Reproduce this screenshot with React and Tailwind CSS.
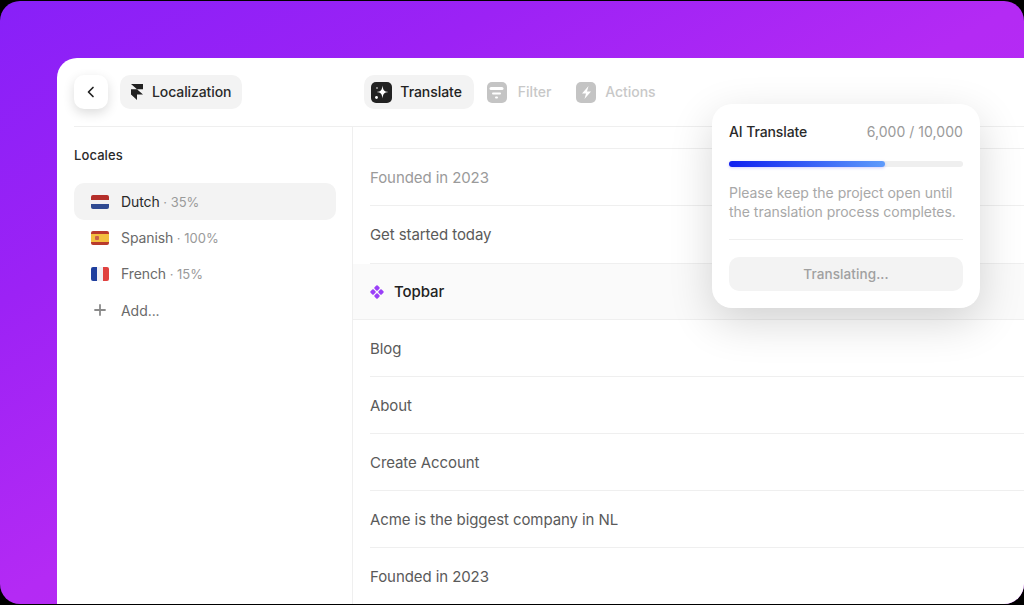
import React from "react";

const Row = ({ children, muted }) => (
  <div className="h-[57px] ml-[17px] pt-[2px] flex items-center border-b border-[#efefef] shrink-0">
    <span className={`text-[15px] tracking-[-0.08px] ${muted ? "text-[#9a9a9a]" : "text-[#5a5a5a]"}`}>{children}</span>
  </div>
);

const Flag = ({ kind }) => {
  if (kind === "fr")
    return (
      <div className="w-[18px] h-[14px] rounded-[2px] overflow-hidden flex shrink-0">
        <div className="flex-1 bg-[#1f3f9e]" />
        <div className="flex-1 bg-[#f0f0f4]" />
        <div className="flex-1 bg-[#e0413f]" />
      </div>
    );
  const colors =
    kind === "nl"
      ? ["bg-[#b42e2a]", "bg-[#f1f1f3]", "bg-[#2f4a92]"]
      : ["bg-[#b93a2c]", "bg-[#f3bf3f]", "bg-[#b93a2c]"];
  return (
    <div className="w-[18px] h-[14px] rounded-[2px] overflow-hidden flex flex-col shrink-0 relative">
      <div className={`${kind === "es" ? "h-[3px]" : "h-[5px]"} ${colors[0]}`} />
      <div className={`flex-1 ${colors[1]}`} />
      <div className={`${kind === "es" ? "h-[3px]" : "h-[5px]"} ${colors[2]}`} />
      {kind === "es" && <div className="absolute left-[4px] top-[5px] w-[4px] h-[4px] rounded-[1px] bg-[#c9604a]" />}
    </div>
  );
};

const Locale = ({ flag, name, pct, active }) => (
  <div className={`rounded-[10px] pl-[17px] flex items-center gap-[12px] text-[14px] ${active ? "h-[37px] bg-[#f3f3f3]" : "h-[36px]"}`}>
    <Flag kind={flag} />
    <span className="tracking-[-0.1px]">
      <span className={active ? "text-[#2a2a2a]" : "text-[#6a6a6a]"}>{name}</span>
      <span className="text-[#9a9a9a] text-[13px] tracking-[0px]"> · {pct}</span>
    </span>
  </div>
);

const Tab = ({ icon, label, active, gap }) => (
  <div className={`h-[34px] flex items-center rounded-[10px] ${active ? "bg-[#f3f3f3] pl-[7px] pr-[12px]" : ""} ${gap}`}>
    {icon}
    <span className={`-mt-[2px] text-[14px] font-medium tracking-[-0.05px] ${active ? "text-[#222222]" : "text-[#c8c8c8]"}`}>{label}</span>
  </div>
);

export default function App() {
  return (
    <div className="w-[1024px] h-[605px] bg-black overflow-hidden relative" style={{ fontFamily: "Inter, sans-serif" }}>
      <div className="mt-px h-[603px] rounded-[20px] bg-[linear-gradient(to_bottom_right,#8820f8_0%,#9c22f5_25%,#b42af4_50%,#bb2cf0_100%)] pl-[57px] pt-[57px] overflow-hidden">
        <div className="bg-white rounded-tl-[20px] h-[546px] flex flex-col relative">
          {/* top bar */}
          <div className="h-[69px] ml-[17px] border-b border-[#efefef] flex items-center shrink-0">
            <div className="w-[34px] h-[34px] rounded-[10px] bg-white shadow-[0_4px_12px_rgba(0,0,0,0.14)] flex items-center justify-center">
              <svg width="16" height="16" viewBox="0 0 16 16" fill="none">
                <path d="M10 3.500 5.500 8l4.500 4.500" stroke="#222" strokeWidth="1.700" strokeLinecap="round" strokeLinejoin="round" />
              </svg>
            </div>
            <div className="ml-[12px] h-[34px] rounded-[10px] bg-[#f3f3f3] flex items-center pl-[10px] pr-[11px] gap-[8px]">
              <svg width="14" height="16" viewBox="0 0 12 16" fill="#222">
                <path d="M0 0h12v5.300H6L0 0ZM0 5.300h6l6 5.300H6V16L0 10.600V5.300Z" />
              </svg>
              <span className="-mt-[2px] text-[14px] font-medium tracking-[-0.1px] text-[#2a2a2a]">Localization</span>
            </div>
            <div className="ml-[122px] flex items-center">
              <Tab
                active
                gap="gap-[8px]"
                label="Translate"
                icon={
                  <div className="w-[21px] h-[21px] rounded-[5px] bg-[#222222] flex items-center justify-center">
                    <svg width="17" height="17" viewBox="0 0 17 17" fill="white">
                      <path d="M9.500 1.500C10 6 11 7.500 15.500 8 11 8.500 10 10 9.500 14.500 9 10 8 8.500 3.500 8 8 7.500 9 6 9.500 1.500Z" />
                      <circle cx="3.500" cy="13.500" r="1.400" />
                      <circle cx="4" cy="4" r="0.800" />
                    </svg>
                  </div>
                }
              />
              <div className="ml-[13px]">
                <Tab
                  gap="gap-[11px]"
                  label="Filter"
                  icon={
                    <div className="w-[20px] h-[21px] rounded-[5px] bg-[#c4c4c4] flex items-center justify-center">
                      <svg width="17" height="17" viewBox="0 0 17 17" fill="none" stroke="white" strokeLinecap="round">
                        <path d="M3 4.500h11" strokeWidth="3" />
                        <path d="M5 9.500h7" strokeWidth="2" />
                        <path d="M8 13.500h1" strokeWidth="2" />
                      </svg>
                    </div>
                  }
                />
              </div>
              <div className="ml-[25px]">
                <Tab
                  gap="gap-[9px]"
                  label="Actions"
                  icon={
                    <div className="w-[20px] h-[21px] rounded-[5px] bg-[#c4c4c4] flex items-center justify-center">
                      <svg width="17" height="17" viewBox="0 0 17 17" fill="white">
                        <path d="M10.500 2 4 9.500h4L6.500 15 13 7.500H9L10.500 2Z" />
                      </svg>
                    </div>
                  }
                />
              </div>
            </div>
          </div>

          {/* body */}
          <div className="flex flex-1 min-h-0">
            <div className="w-[296px] shrink-0 border-r border-[#efefef] pl-[17px] pr-[16px] pt-[20px]">
              <div className="text-[13px] font-medium tracking-[0.1px] text-[#2a2a2a] leading-[17px] mb-[19px]">Locales</div>
              <Locale flag="nl" name="Dutch" pct="35%" active />
              <Locale flag="es" name="Spanish" pct="100%" />
              <Locale flag="fr" name="French" pct="15%" />
              <div className="h-[36px] pl-[20px] flex items-center gap-[15px] text-[14px] tracking-[-0.05px] text-[#6a6a6a]">
                <svg width="12" height="12" viewBox="0 0 12 12" stroke="#8a8a8a" strokeWidth="1.800" strokeLinecap="round">
                  <path d="M6 1v10M1 6h10" />
                </svg>
                Add...
              </div>
            </div>

            <div className="flex-1 min-w-0 overflow-hidden flex flex-col">
              <div className="h-[22px] ml-[17px] border-b border-[#efefef] shrink-0" />
              <Row muted>Founded in 2023</Row>
              <div className="h-[58px] ml-[17px] pt-[2px] flex items-center border-b border-[#efefef] shrink-0">
                <span className="text-[15px] tracking-[-0.08px] text-[#5a5a5a]">Get started today</span>
              </div>
              <div className="h-[56px] bg-[#fafafa] border-b border-[#efefef] flex items-center pl-[17px] gap-[10px] shrink-0">
                <svg width="14" height="14" viewBox="0 0 14 14" fill="#9a3ff8">
                  <rect x="4.800" y="0.800" width="4.400" height="4.400" rx="1" transform="rotate(45 7 3)" />
                  <rect x="4.800" y="8.800" width="4.400" height="4.400" rx="1" transform="rotate(45 7 11)" />
                  <rect x="0.800" y="4.800" width="4.400" height="4.400" rx="1" transform="rotate(45 3 7)" />
                  <rect x="8.800" y="4.800" width="4.400" height="4.400" rx="1" transform="rotate(45 11 7)" />
                </svg>
                <span className="mt-[2px] text-[15px] font-medium tracking-[-0.08px] text-[#222222]">Topbar</span>
              </div>
              <Row>Blog</Row>
              <Row>About</Row>
              <Row>Create Account</Row>
              <Row>Acme is the biggest company in NL</Row>
              <Row>Founded in 2023</Row>
            </div>
          </div>

          {/* popover */}
          <div className="absolute left-[655px] top-[46px] w-[268px] h-[204px] bg-white rounded-[20px] shadow-[0_14px_44px_rgba(0,0,0,0.16)] px-[17px] pt-[17px]">
            <div className="flex justify-between items-center h-[20px]">
              <span className="text-[14px] font-medium tracking-[-0.1px] text-[#2a2a2a]">AI Translate</span>
              <span className="text-[14px] tracking-[0.05px] text-[#9a9a9a]">6,000 / 10,000</span>
            </div>
            <div className="mt-[20px] h-[6px] rounded-full bg-[#efefef]">
              <div className="h-full rounded-full bg-[linear-gradient(90deg,#0f1ff0,#5f9bfb)] shadow-[0_1px_3px_rgba(80,60,255,0.25)]" style={{ width: "66.500%" }} />
            </div>
            <p className="mt-[16px] text-[14px] leading-[19px] tracking-[-0.03px] text-[#a8a8a8] whitespace-nowrap">
              Please keep the project open until
              <br />
              the translation process completes.
            </p>
            <div className="mt-[18px] border-t border-[#efefef] pt-[17px]">
              <div className="h-[34px] rounded-[10px] bg-[#f3f3f3] flex items-center justify-center text-[13.500px] font-medium tracking-[0.1px] text-[#a0a0a0]">
                Translating...
              </div>
            </div>
          </div>
        </div>
      </div>
    </div>
  );
}
